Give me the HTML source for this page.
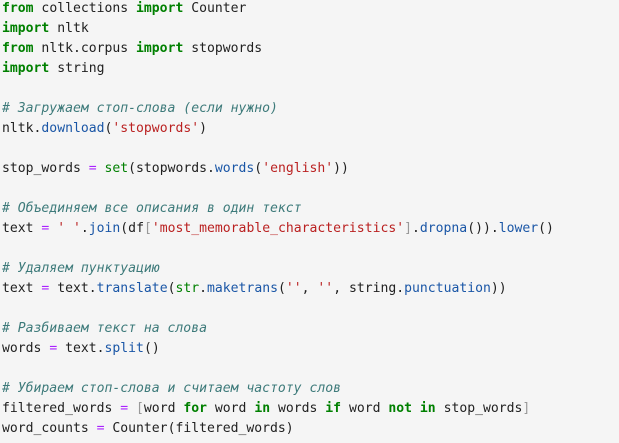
<html><head><style>
body{margin:0;background:#f5f5f5;}
pre{margin:0;padding:0 0 0 2px;position:absolute;top:-1px;left:0;font-family:"DejaVu Sans Mono","Liberation Mono",monospace;font-size:13.1px;line-height:20px;color:#212121;}
.k{color:#008000;font-weight:bold}.b{color:#008000}.c{color:#3d7a7a;font-style:italic}.s{color:#ba2121}.a{color:#1a56a6}.o{color:#aa22ff}.g{color:#999}
</style></head><body><pre><span class="k">from</span> collections <span class="k">import</span> Counter
<span class="k">import</span> nltk
<span class="k">from</span> nltk.corpus <span class="k">import</span> stopwords
<span class="k">import</span> string

<span class="c"># Загружаем стоп-слова (если нужно)</span>
nltk.<span class="a">download</span>(<span class="s">'stopwords'</span>)

stop_words <span class="o">=</span> <span class="b">set</span>(stopwords.<span class="a">words</span>(<span class="s">'english'</span>))

<span class="c"># Объединяем все описания в один текст</span>
text <span class="o">=</span> <span class="s">' '</span>.<span class="a">join</span>(df<span class="g">[</span><span class="s">'most_memorable_characteristics'</span><span class="g">]</span>.<span class="a">dropna</span>()).<span class="a">lower</span>()

<span class="c"># Удаляем пунктуацию</span>
text <span class="o">=</span> text.<span class="a">translate</span>(<span class="b">str</span>.<span class="a">maketrans</span>(<span class="s">''</span>, <span class="s">''</span>, string.<span class="a">punctuation</span>))

<span class="c"># Разбиваем текст на слова</span>
words <span class="o">=</span> text.<span class="a">split</span>()

<span class="c"># Убираем стоп-слова и считаем частоту слов</span>
filtered_words <span class="o">=</span> <span class="g">[</span>word <span class="k">for</span> word <span class="k">in</span> words <span class="k">if</span> word <span class="k">not</span> <span class="k">in</span> stop_words<span class="g">]</span>
word_counts <span class="o">=</span> Counter(filtered_words)</pre></body></html>
